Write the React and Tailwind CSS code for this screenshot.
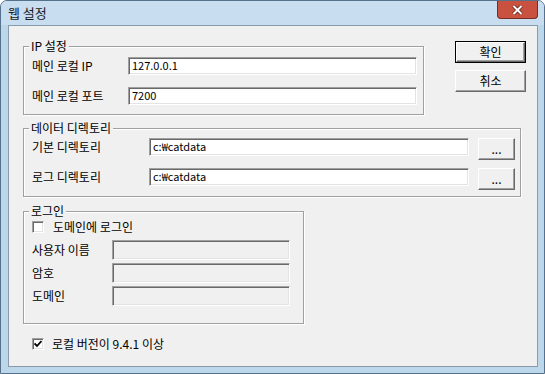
import React from 'react';

const font = { fontFamily: '"Noto Sans CJK KR", "Liberation Sans", sans-serif' };

function Field({ className = '', value = '', disabled }) {
  return (
    <div
      className={`h-[18px] border border-t-[#a0a0a0] border-l-[#a0a0a0] border-b-white border-r-white shadow-[inset_1px_1px_0_#696969,inset_-1px_-1px_0_#e3e3e3] pl-[3px] text-[11px] leading-[15px] text-black ${
        disabled ? 'bg-[#f0f0f0]' : 'bg-white'
      } ${className}`}
    >
      {value}
    </div>
  );
}

function Btn({ children, def, className = '' }) {
  return (
    <div className={`${def ? 'border border-black' : ''} ${className}`}>
      <div className="h-full flex items-center justify-center bg-[#f0f0f0] border border-t-white border-l-white border-b-[#696969] border-r-[#696969] shadow-[inset_-1px_-1px_0_#a0a0a0] text-[12px] text-black">
        {children}
      </div>
    </div>
  );
}

function Check({ checked }) {
  return (
    <span className="w-[12px] h-[12px] flex items-center justify-center bg-white border border-t-[#a0a0a0] border-l-[#a0a0a0] border-b-white border-r-white shadow-[inset_1px_1px_0_#696969,inset_-1px_-1px_0_#e3e3e3]">
      {checked && (
        <svg width="8" height="8" viewBox="0 0 8 8">
          <path d="M0.5 3.5 L3 6 L7.5 1" fill="none" stroke="#000" strokeWidth="1.8" />
        </svg>
      )}
    </span>
  );
}

function Group({ label, className = '', children }) {
  return (
    <fieldset
      className={`border border-[#a0a0a0] shadow-[inset_1px_1px_0_#fff,1px_1px_0_#fff] pl-[8px] ${className}`}
    >
      <legend className="-ml-[3px] px-[2px] bg-[#f0f0f0] text-[12px] leading-[14px] text-black">{label}</legend>
      {children}
    </fieldset>
  );
}

export default function App() {
  return (
    <div
      style={font}
      className="w-[545px] h-[374px] overflow-hidden flex flex-col border border-[#56718c] rounded-t-[7px] bg-[#bcd6ea]"
    >
      {/* title bar */}
      <div className="h-[24px] flex items-start justify-between pl-[7px] pr-[6px] bg-[#c8ddef]">
        <span className="mt-[4px] text-[13px] leading-[16px] text-[#1a1a1a]">웹 설정</span>
        <div className="w-[41px] h-[18px] flex items-center justify-center rounded-b-[4px] border border-t-0 border-[#7a2b22] bg-[#c9513f]">
          <svg width="11" height="10" viewBox="0 0 11 10">
            <path d="M1.5 1 L9.5 9 M9.5 1 L1.5 9" stroke="#5a1a14" strokeWidth="3.4" />
            <path d="M1.5 1 L9.5 9 M9.5 1 L1.5 9" stroke="#fff" strokeWidth="2" />
          </svg>
        </div>
      </div>

      {/* client area */}
      <div className="ml-[7px] mr-[6px] mb-[6px] h-[342px] border border-[#8b9aab] bg-[#f0f0f0] pl-[14px] pt-[13px] text-[12px] text-black">
        <div className="flex items-start">
          <Group label="IP 설정" className="w-[401px] h-[76px]">
            <div className="flex items-center mt-[4px]">
              <span className="w-[96px] leading-[18px]">메인 로컬 IP</span>
              <Field className="w-[289px]" value="127.0.0.1" />
            </div>
            <div className="flex items-center mt-[12px]">
              <span className="w-[96px] leading-[18px]">메인 로컬 포트</span>
              <Field className="w-[289px]" value="7200" />
            </div>
          </Group>
          <div className="ml-[31px] mt-[2px] flex flex-col gap-[7px]">
            <Btn def className="w-[71px] h-[22px]">확인</Btn>
            <Btn className="w-[71px] h-[22px]">취소</Btn>
          </div>
        </div>

        <Group label="데이터 디렉토리" className="mt-[6px] w-[498px] h-[76px]">
          <div className="flex items-start mt-[3px]">
            <span className="w-[117px] leading-[18px]">기본 디렉토리</span>
            <Field className="w-[320px]" value="c:₩catdata" />
            <Btn className="ml-[9px] w-[37px] h-[22px]">...</Btn>
          </div>
          <div className="flex items-start mt-[8px]">
            <span className="w-[117px] leading-[18px]">로그 디렉토리</span>
            <Field className="w-[320px]" value="c:₩catdata" />
            <Btn className="ml-[9px] w-[37px] h-[22px]">...</Btn>
          </div>
        </Group>

        <Group label="로그인" className="mt-[7px] w-[281px] h-[120px]">
          <div className="flex items-center gap-[9px] mt-[1px] h-[16px]">
            <Check />
            <span>도메인에 로그인</span>
          </div>
          <div className="flex flex-col gap-[3px] mt-[5px]">
            <div className="flex items-center">
              <span className="w-[80px]">사용자 이름</span>
              <Field disabled className="w-[178px] h-[20px]" />
            </div>
            <div className="flex items-center">
              <span className="w-[80px]">암호</span>
              <Field disabled className="w-[178px] h-[20px]" />
            </div>
            <div className="flex items-center">
              <span className="w-[80px]">도메인</span>
              <Field disabled className="w-[178px] h-[20px]" />
            </div>
          </div>
        </Group>

        <div className="flex items-center gap-[8px] mt-[13px] ml-[9px] h-[14px]">
          <Check checked />
          <span>로컬 버전이 9.4.1 이상</span>
        </div>
      </div>
    </div>
  );
}
